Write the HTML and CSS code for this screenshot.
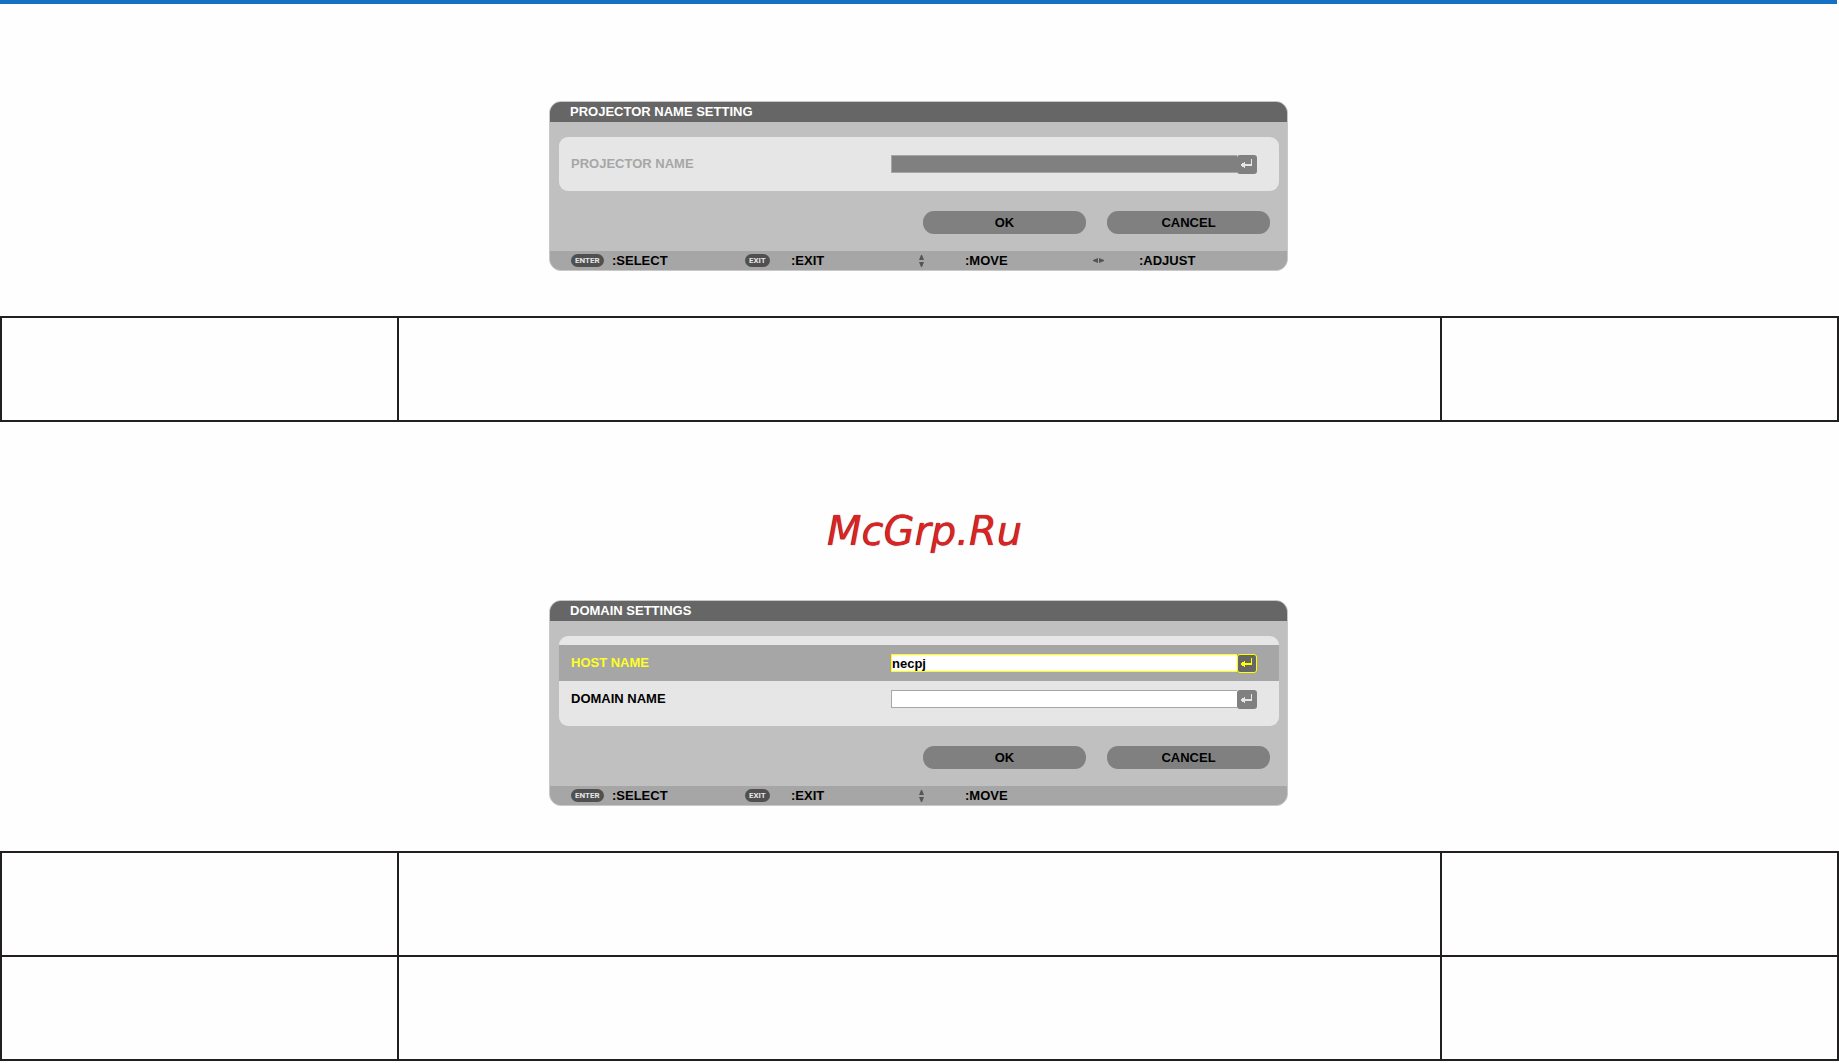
FILE: index.html
```html
<!DOCTYPE html>
<html lang="en">
<head>
  <meta charset="utf-8">
  <meta name="viewport" content="width=device-width, initial-scale=1">
  <title>Projector network settings</title>
  <link rel="stylesheet" href="styles.css">
</head>
<body>
  <svg class="sprite" aria-hidden="true">
    <symbol id="return" viewBox="0 0 20 19">
      <path d="M14 4h1v7H8v2H7v-1H5v-1H4V9h1V8h2V7h1v2h6z" fill="currentColor"/>
    </symbol>
    <symbol id="updown" viewBox="0 0 5 12">
      <path d="M2 0h1l2 5H0zM0 7h5l-2 5H2z" fill="currentColor"/>
    </symbol>
    <symbol id="leftright" viewBox="0 0 11 5">
      <path d="M5 0v5L0 3V2zM6 0v5l5-2V2z" fill="currentColor"/>
    </symbol>
  </svg>

  <header class="rule"></header>

  <main>
    <form class="dialog">
      <h2 class="dialog-title">PROJECTOR NAME SETTING</h2>
      <div class="panel">
        <div class="row row-disabled">
          <label for="projector">PROJECTOR NAME</label>
          <div class="field">
            <input id="projector" type="text" disabled>
            <button class="enter" type="button" aria-label="Edit projector name"><svg><use href="#return"/></svg></button>
          </div>
        </div>
      </div>
      <div class="actions">
        <button class="action" type="button">OK</button>
        <button class="action" type="button">CANCEL</button>
      </div>
      <div class="hints">
        <div class="hint"><span class="slot slot-enter"><span class="key">ENTER</span></span>:SELECT</div>
        <div class="hint"><span class="slot"><span class="key">EXIT</span></span>:EXIT</div>
        <div class="hint"><span class="slot"><svg class="updown"><use href="#updown"/></svg></span>:MOVE</div>
        <div class="hint"><span class="slot"><svg class="leftright"><use href="#leftright"/></svg></span>:ADJUST</div>
      </div>
    </form>

    <table class="details">
      <colgroup><col class="side"><col><col class="side"></colgroup>
      <tbody><tr><td></td><td></td><td></td></tr></tbody>
    </table>

    <p class="watermark">McGrp.Ru</p>

    <form class="dialog">
      <h2 class="dialog-title">DOMAIN SETTINGS</h2>
      <div class="panel">
        <div class="row row-selected">
          <label for="host">HOST NAME</label>
          <div class="field">
            <input id="host" type="text" value="necpj">
            <button class="enter" type="button" aria-label="Edit host name"><svg><use href="#return"/></svg></button>
          </div>
        </div>
        <div class="row">
          <label for="domain">DOMAIN NAME</label>
          <div class="field">
            <input id="domain" type="text">
            <button class="enter" type="button" aria-label="Edit domain name"><svg><use href="#return"/></svg></button>
          </div>
        </div>
      </div>
      <div class="actions">
        <button class="action" type="button">OK</button>
        <button class="action" type="button">CANCEL</button>
      </div>
      <div class="hints">
        <div class="hint"><span class="slot slot-enter"><span class="key">ENTER</span></span>:SELECT</div>
        <div class="hint"><span class="slot"><span class="key">EXIT</span></span>:EXIT</div>
        <div class="hint"><span class="slot"><svg class="updown"><use href="#updown"/></svg></span>:MOVE</div>
      </div>
    </form>

    <table class="details">
      <colgroup><col class="side"><col><col class="side"></colgroup>
      <tbody>
        <tr><td></td><td></td><td></td></tr>
        <tr><td></td><td></td><td></td></tr>
      </tbody>
    </table>
  </main>
</body>
</html>
```
FILE: styles.css
```css
* {
  box-sizing: border-box;
}

body {
  margin: 0;
  background: #fefefe;
  color: #000;
  font: bold 13px/18px "Liberation Sans", Arial, sans-serif;
}

.sprite {
  display: none;
}

svg {
  display: block;
}

.rule {
  height: 4px;
  margin: 0 2px 97px 0;
  background: #1870c4;
}

main {
  padding-right: 2px;
}

/* On-screen menu windows */
.dialog {
  width: 739px;
  max-width: 100%;
  margin: 0 auto 45px;
  overflow: hidden;
  border: 1px solid #c8c8c8;
  border-radius: 12px;
  background: #c0c0c0;
}

.dialog-title {
  margin: 0;
  padding: 0 20px;
  background: #666;
  color: #fff;
  font-size: 13px;
  line-height: 20px;
}

.panel {
  margin: 15px 8px 20px 9px;
  padding: 9px 0;
  border-radius: 9px;
  background: #e6e6e6;
}

.row {
  display: grid;
  grid-template-columns: 1fr 366px;
  align-items: center;
  height: 36px;
  padding: 0 22px 0 12px;
}

.row-selected {
  background: #a6a6a6;
  color: #ff2;
}

.row-disabled {
  color: #a6a6a6;
}

.field {
  display: flex;
  align-items: center;
}

.field input {
  flex: 1;
  min-width: 0;
  height: 18px;
  padding: 0;
  border: 1px solid #a6a6a6;
  border-right: 0;
  border-radius: 0;
  outline: 0;
  background: #fff;
  color: #000;
  font: inherit;
  line-height: 16px;
}

.field input:disabled {
  background: #808080;
}

.row-selected input {
  border-color: #ff0;
}

.enter {
  width: 20px;
  height: 19px;
  padding: 0;
  border: 0;
  border-radius: 3px;
  background: #808080;
  color: #e6e6e6;
}

.enter svg {
  width: 20px;
  height: 19px;
}

.row-selected .enter {
  background: #666;
  box-shadow: inset 0 0 0 1px #ff0;
  color: #ff0;
}

.actions {
  display: flex;
  justify-content: flex-end;
  gap: 21px;
  padding: 0 17px 17px;
}

.action {
  width: 163px;
  height: 23px;
  padding: 0;
  border: 0;
  border-radius: 11px;
  background: #808080;
  color: #000;
  font: inherit;
}

.hints {
  display: grid;
  grid-template-columns: repeat(4, 174px);
  height: 19px;
  padding-left: 21px;
  background: #a6a6a6;
}

.hint {
  display: flex;
  align-items: center;
}

.slot {
  width: 46px;
}

.slot-enter {
  width: 41px;
}

.key {
  display: block;
  width: fit-content;
  padding: 0 4px;
  border-radius: 7px;
  background: #505050;
  color: #e6e6e6;
  font: bold 9px/13px Roboto, "Liberation Sans", sans-serif;
  font-size: 8px;
}

.updown {
  width: 5px;
  height: 12px;
  color: #555;
}

.leftright {
  width: 11px;
  height: 5px;
  color: #555;
}

/* Ruled tables span the full window */
.details {
  width: calc(100% + 2px);
  border-collapse: collapse;
  table-layout: fixed;
}

.details .side {
  width: 397px;
}

.details td {
  height: 104px;
  padding: 0;
  border: 2px solid #231f20;
}

.watermark {
  margin: 85px 0 45px;
  padding-left: 12px;
  color: #dd2222;
  font: italic 40px/48px "DejaVu Sans", Verdana, sans-serif;
  text-align: center;
  text-shadow: 0 0 1px #401020;
}
```
